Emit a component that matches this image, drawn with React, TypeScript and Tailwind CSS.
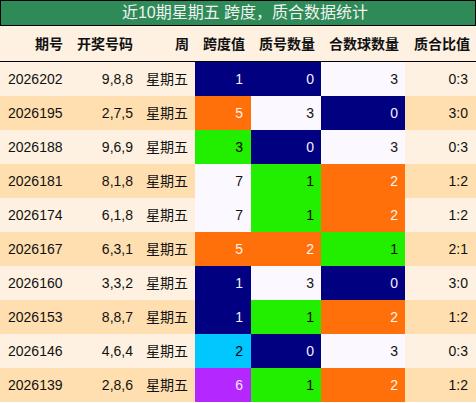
import React from "react";

type C = "navy" | "orange" | "green" | "white" | "cyan" | "purple";

const cellCls: Record<C, string> = {
  navy: "bg-[#000080] text-[#f0f0ff]",
  orange: "bg-[#ff700a] text-[#fff3ea]",
  green: "bg-[#22ee00] text-black",
  white: "bg-[#fcf8ff] text-[#111]",
  cyan: "bg-[#00c8ff] text-black",
  purple: "bg-[#b428ff] text-[#f4e8ff]",
};

const rows: [string, string, [string, C], [string, C], [string, C], string][] = [
  ["2026202", "9,8,8", ["1", "navy"], ["0", "navy"], ["3", "white"], "0:3"],
  ["2026195", "2,7,5", ["5", "orange"], ["3", "white"], ["0", "navy"], "3:0"],
  ["2026188", "9,6,9", ["3", "green"], ["0", "navy"], ["3", "white"], "0:3"],
  ["2026181", "8,1,8", ["7", "white"], ["1", "green"], ["2", "orange"], "1:2"],
  ["2026174", "6,1,8", ["7", "white"], ["1", "green"], ["2", "orange"], "1:2"],
  ["2026167", "6,3,1", ["5", "orange"], ["2", "orange"], ["1", "green"], "2:1"],
  ["2026160", "3,3,2", ["1", "navy"], ["3", "white"], ["0", "navy"], "3:0"],
  ["2026153", "8,8,7", ["1", "navy"], ["1", "green"], ["2", "orange"], "1:2"],
  ["2026146", "4,6,4", ["2", "cyan"], ["0", "navy"], ["3", "white"], "0:3"],
  ["2026139", "2,8,6", ["6", "purple"], ["1", "green"], ["2", "orange"], "1:2"],
];

const headers = ["期号", "开奖号码", "周", "跨度值", "质号数量", "合数球数量", "质合比值"];

export default function App() {
  return (
    <div
      className="w-[476px] bg-white text-[14px] text-[#111]"
      style={{ fontFamily: '"Liberation Sans", Arial, "Noto Sans CJK SC", sans-serif' }}
    >
      <div className="h-[26px] border border-black bg-[#2e8b57] text-[#f2f2f2] text-[16px] flex items-center justify-center pl-[14px]">
        近10期星期五 跨度，质合数据统计
      </div>
      <div className="grid grid-cols-[69px_70px_56px_56px_70px_84px_71px] h-[36px] bg-[#fef1e1] border-b border-black font-bold">
        {headers.map((h) => (
          <div key={h} className="flex items-center justify-end pr-[6px] pt-[1px]">
            {h}
          </div>
        ))}
      </div>
      {rows.map((r, i) => {
        const rowBg = i % 2 === 0 ? "bg-[#fef1e1]" : "bg-[#ffdfb0]";
        return (
          <div
            key={r[0]}
            className={`grid grid-cols-[69px_70px_56px_56px_70px_84px_71px] h-[34px] ${rowBg}`}
          >
            <div className="flex items-center justify-start pl-[8px]">{r[0]}</div>
            <div className="flex items-center justify-end pr-[6px]">{r[1]}</div>
            <div className="flex items-center justify-end pr-[7px]">星期五</div>
            <div className={`flex items-center justify-end pr-[8px] ${cellCls[r[2][1]]}`}>{r[2][0]}</div>
            <div className={`flex items-center justify-end pr-[7px] ${cellCls[r[3][1]]}`}>{r[3][0]}</div>
            <div className={`flex items-center justify-end pr-[7px] ${cellCls[r[4][1]]}`}>{r[4][0]}</div>
            <div className="flex items-center justify-end pr-[8px]">{r[5]}</div>
          </div>
        );
      })}
    </div>
  );
}
